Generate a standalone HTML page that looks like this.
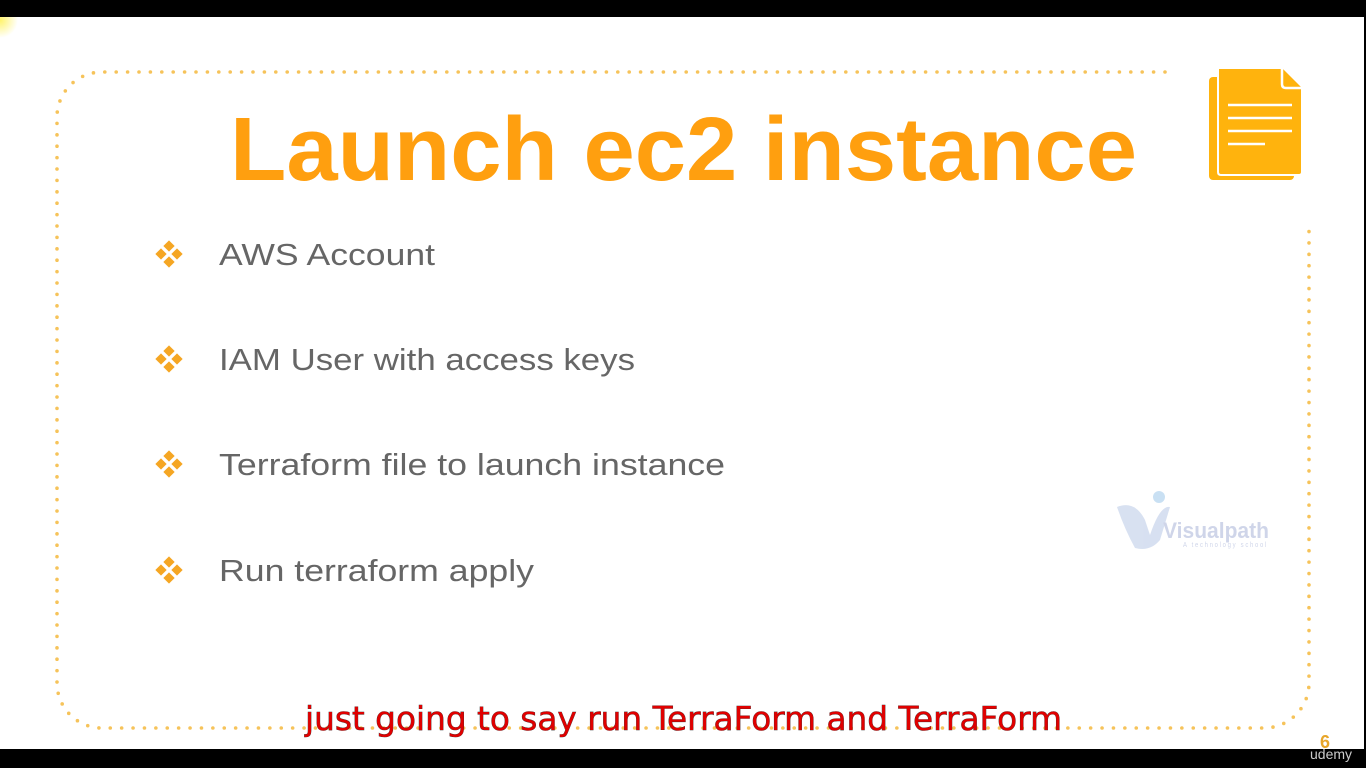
<!DOCTYPE html>
<html><head><meta charset="utf-8"><style>
html,body{margin:0;padding:0;background:#000;}
svg{display:block}
</style></head><body>
<svg width="1366" height="768" viewBox="0 0 1366 768" xmlns="http://www.w3.org/2000/svg">
<defs><radialGradient id="g" cx="0.5" cy="0.5" r="0.5"><stop offset="0" stop-color="#fff36a"/><stop offset="1" stop-color="#fff36a" stop-opacity="0"/></radialGradient>
<clipPath id="c"><rect x="0" y="17" width="1364" height="732"/></clipPath></defs>
<rect x="0" y="17" width="1364" height="732" fill="#fff"/>
<circle cx="0" cy="20" r="18" fill="url(#g)" clip-path="url(#c)"/>
<path d="M1165 72 L102 72 A45 45 0 0 0 57 117 L57 683 A45 45 0 0 0 102 728 L1264 728 A45 45 0 0 0 1309 683 L1309 222" fill="none" stroke="#F6C35A" stroke-width="3.6" stroke-linecap="round" stroke-dasharray="0 11.4"/>
<text x="230" y="180" font-family="Liberation Sans, sans-serif" font-weight="bold" font-size="90" fill="#FF9F0F" textLength="907" lengthAdjust="spacingAndGlyphs">Launch ec2 instance</text>
<g fill="#FFB30D">
<rect x="1209" y="77" width="85" height="103" rx="4"/>
<path d="M1218 68 L1282 68 L1302 88 L1302 172 Q1302 175 1299 175 L1221 175 Q1218 175 1218 172 Z" stroke="#fff" stroke-width="2"/>
<path d="M1282 68 L1282 84 Q1282 88 1286 88 L1302 88" stroke="#fff" stroke-width="2.5" fill="#FFB30D"/>
<g stroke="#fff" stroke-width="2.5"><line x1="1228" y1="105" x2="1292" y2="105"/><line x1="1228" y1="118" x2="1292" y2="118"/><line x1="1228" y1="131" x2="1292" y2="131"/><line x1="1228" y1="144" x2="1265" y2="144"/></g>
</g>
<g font-family="Liberation Sans, sans-serif" font-size="31" fill="#666">
<text x="219" y="265" textLength="216" lengthAdjust="spacingAndGlyphs">AWS Account</text>
<text x="219" y="370" textLength="416" lengthAdjust="spacingAndGlyphs">IAM User with access keys</text>
<text x="219" y="475" textLength="506" lengthAdjust="spacingAndGlyphs">Terraform file to launch instance</text>
<text x="219" y="581" textLength="315" lengthAdjust="spacingAndGlyphs">Run terraform apply</text>
</g>
<g fill="#F5A623">
<g transform="translate(169,254)"><g id="d"><rect x="-4" y="-12" width="8" height="8" transform="rotate(45 0 -8)"/><rect x="-4" y="4" width="8" height="8" transform="rotate(45 0 8)"/><rect x="-12" y="-4" width="8" height="8" transform="rotate(45 -8 0)"/><rect x="4" y="-4" width="8" height="8" transform="rotate(45 8 0)"/></g></g>
<use href="#d" transform="translate(169,359)"/>
<use href="#d" transform="translate(169,464)"/>
<use href="#d" transform="translate(169,570)"/>
</g>
<g opacity="0.55">
<path d="M1117 507 Q1135 500 1145 520 L1150 535 Q1160 505 1170 507 L1160 540 Q1150 552 1135 548 Q1125 530 1117 507Z" fill="#b8c8e6"/>
<circle cx="1159" cy="497" r="6" fill="#9ec8ea"/>
<text x="1163" y="538" font-family="Liberation Sans, sans-serif" font-weight="bold" font-size="22" fill="#a9b4d8" textLength="106" lengthAdjust="spacingAndGlyphs">Visualpath</text>
<text x="1183" y="547" font-family="Liberation Sans, sans-serif" font-size="7" fill="#a9b4d8" letter-spacing="2" textLength="85" lengthAdjust="spacingAndGlyphs">A technology school</text>
</g>
<text x="1320" y="748" font-family="Liberation Sans, sans-serif" font-weight="bold" font-size="18" fill="#e8a62a">6</text>
<text x="1310" y="759" font-family="Liberation Sans, sans-serif" font-size="14" fill="#ccc">udemy</text>
<text x="305" y="730" font-family="DejaVu Sans, sans-serif" font-size="33" fill="#e00000" stroke="#333" stroke-width="0.6" paint-order="stroke" textLength="757" lengthAdjust="spacingAndGlyphs">just going to say run TerraForm and TerraForm</text>
</svg>
</body></html>
